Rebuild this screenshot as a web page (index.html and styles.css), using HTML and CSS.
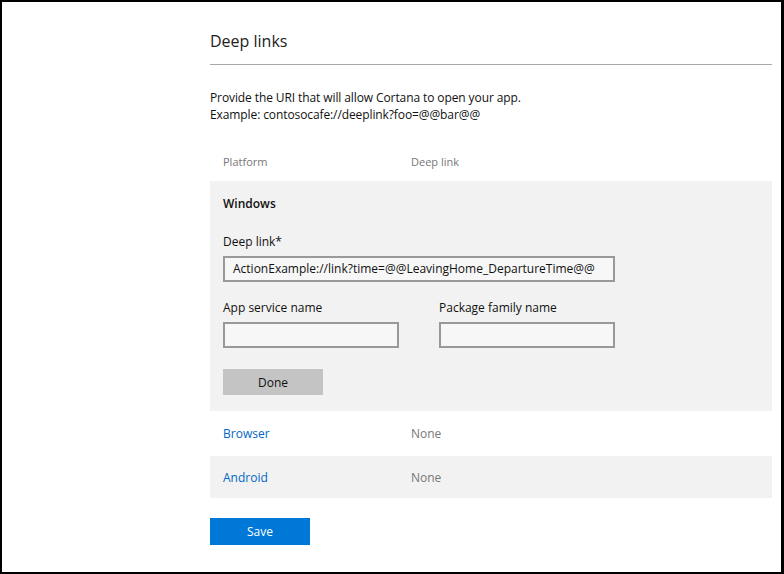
FILE: index.html
```html
<!DOCTYPE html>
<html>
<head>
<meta charset="utf-8">
<link rel="stylesheet" href="styles.css">
</head>
<body>
<div class="frame">
  <main class="page">
    <h1 class="title">Deep links</h1>
    <p class="intro">Provide the URI that will allow Cortana to open your app.<br>Example: contosocafe://deeplink?foo=@@bar@@</p>
    <div class="table">
      <div class="thead">
        <span class="col1">Platform</span>
        <span class="col2">Deep link</span>
      </div>
      <div class="panel">
        <div class="panel-title">Windows</div>
        <label class="lbl lbl-first">Deep link*</label>
        <div class="input wide">ActionExample://link?time=@@LeavingHome_DepartureTime@@</div>
        <div class="pair">
          <div class="field">
            <label class="lbl">App service name</label>
            <div class="input half"></div>
          </div>
          <div class="field">
            <label class="lbl">Package family name</label>
            <div class="input half"></div>
          </div>
        </div>
        <button class="btn-done">Done</button>
      </div>
      <div class="row">
        <a class="col1 link">Browser</a>
        <span class="col2 none">None</span>
      </div>
      <div class="row alt">
        <a class="col1 link">Android</a>
        <span class="col2 none">None</span>
      </div>
    </div>
    <button class="btn-save">Save</button>
  </main>
</div>
</body>
</html>
```
FILE: styles.css
```css
* { box-sizing: border-box; }
html, body { margin: 0; padding: 0; }
body {
  width: 784px;
  height: 574px;
  font-family: "Open Sans", "Noto Sans", sans-serif;
  color: #1a1a1a;
  background: #fff;
}
.frame {
  width: 784px;
  height: 574px;
  border-top: 2px solid #000;
  border-left: 2px solid #000;
  border-right: 3px solid #000;
  border-bottom: 2px solid #000;
  overflow: hidden;
}
.page {
  margin-left: 208px;
  width: 562px;
  padding-top: 28px;
}
.title {
  margin: 0;
  font-size: 16px;
  font-weight: 400;
  line-height: 22px;
  padding-bottom: 12px;
  border-bottom: 1px solid #a8a8a8;
  color: #222;
}
.intro {
  margin: 24px 0 0;
  font-size: 12px;
  line-height: 17px;
  color: #111;
  letter-spacing: -0.1px;
}
.table { margin-top: 20px; }
.thead {
  display: flex;
  height: 38px;
  align-items: center;
  padding-bottom: 2px;
  font-size: 11px;
  color: #777;
}
.col1 { width: 201px; padding-left: 13px; }
.col2 { flex: 1; }
.panel {
  background: #f2f2f2;
  padding: 14px 13px 16px;
}
.panel-title {
  font-weight: 600;
  font-size: 12px;
  line-height: 18px;
  color: #111;
}
.lbl {
  display: block;
  font-size: 12px;
  line-height: 18px;
  color: #111;
  margin-bottom: 5px;
}
.lbl-first { margin-top: 20px; }
.input {
  height: 26px;
  border: 2px solid #999;
  background: #f7f7f7;
  font-size: 12px;
  line-height: 22px;
  padding-left: 8px;
  color: #111;
  white-space: nowrap;
  overflow: hidden;
}
.wide { width: 392px; }
.half { width: 176px; }
.pair {
  display: flex;
  gap: 40px;
  margin-top: 17px;
}
.btn-done {
  display: block;
  margin-top: 21px;
  width: 100px;
  height: 26px;
  border: 0;
  background: #c4c4c4;
  font-family: inherit;
  font-size: 12px;
  color: #111;
  padding: 0;
}
.row {
  display: flex;
  align-items: center;
  height: 45px;
  font-size: 12px;
}
.row.alt { background: #f2f2f2; height: 42px; }
.link { color: #0067c5; }
.none { color: #777; }
.btn-save {
  display: block;
  margin-top: 20px;
  width: 100px;
  height: 27px;
  border: 0;
  background: #0078d7;
  color: #fff;
  font-family: inherit;
  font-size: 12px;
  padding: 0;
}
```
